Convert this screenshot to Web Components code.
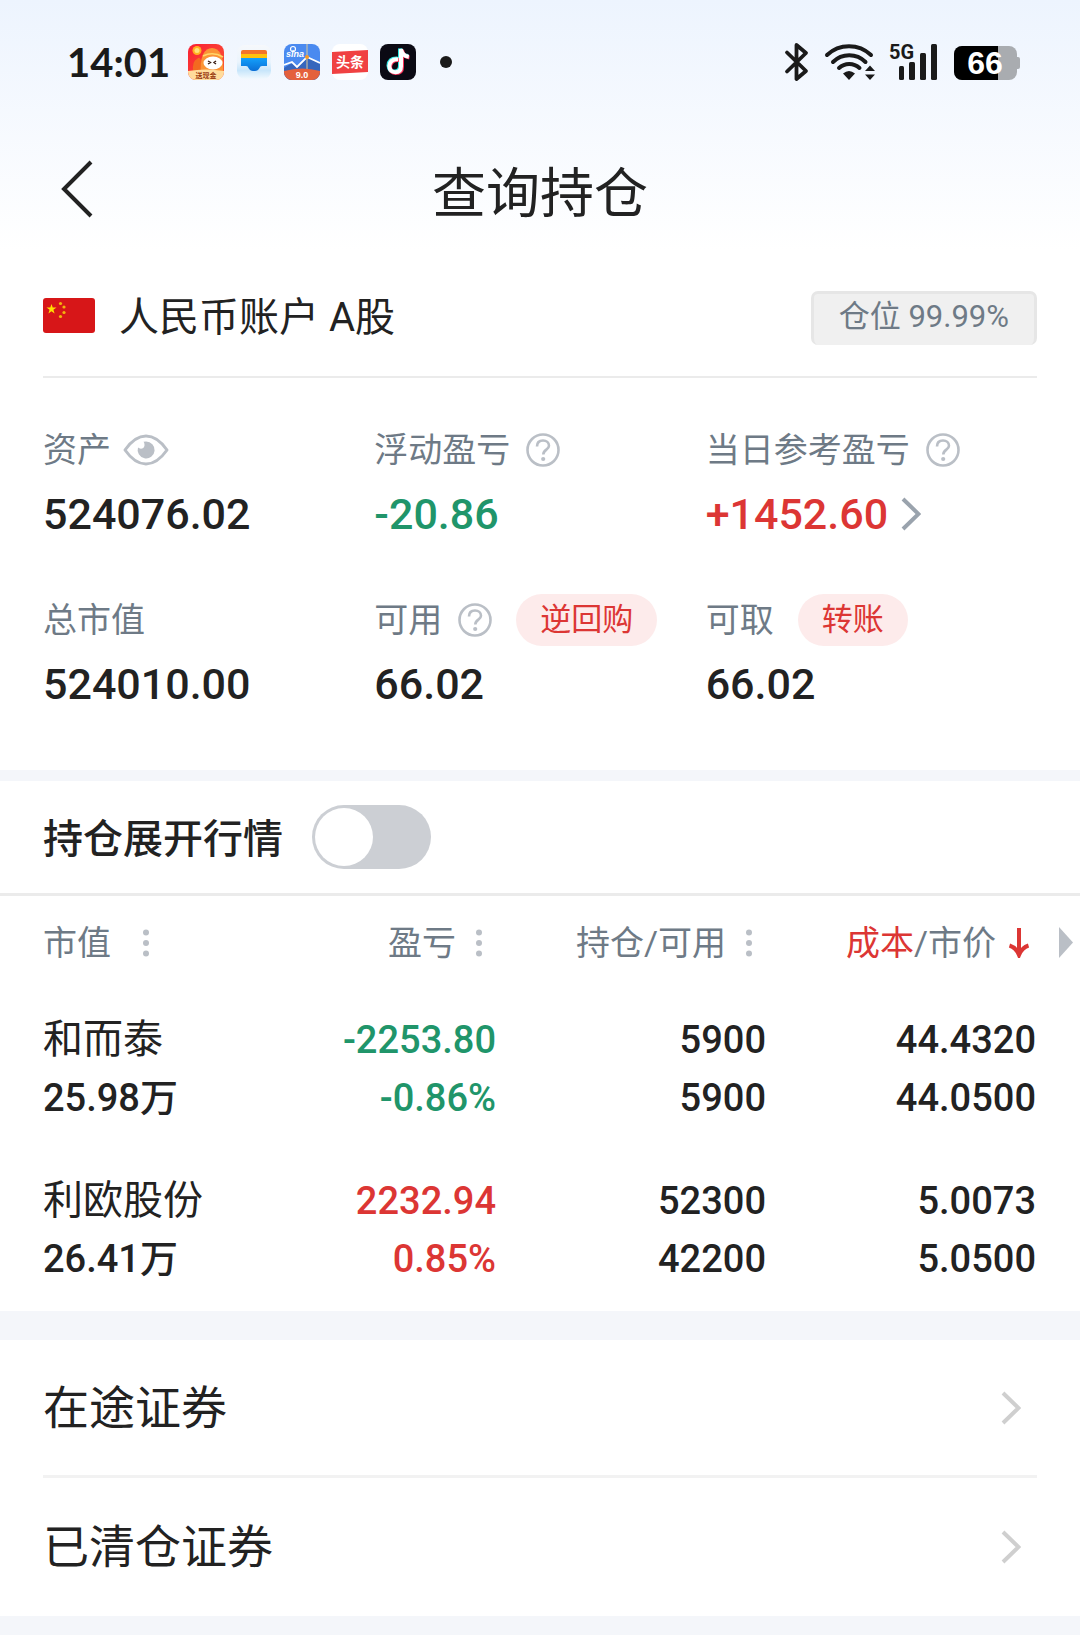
<!DOCTYPE html>
<html lang="zh-CN">
<head>
<meta charset="utf-8">
<meta name="viewport" content="width=device-width, initial-scale=1">
<title>查询持仓</title>
<style>
  :root {
    --ink: #222222;
    --muted: #6e7a86;
    --icon: #babfc6;
    --red: #dc3634;
    --green: #20956a;
    --band: #f4f6fa;
    --line: #ebebeb;
    --edge: 43px;
    --sans: Roboto, "Noto Sans CJK SC", sans-serif;
  }
  body {
    margin: 0;
    min-height: 100vh;
    background: var(--band);
    color: var(--ink);
    font-family: var(--sans);
  }
</style>
</head>
<body>
<holdings-page></holdings-page>

<script>
const define = (name, markup, setup) => {
  const template = document.createElement('template');
  template.innerHTML = markup;
  customElements.define(name, class extends HTMLElement {
    constructor() {
      super();
      this.attachShadow({ mode: 'open' }).append(template.content.cloneNode(true));
    }
    connectedCallback() {
      if (setup) setup(this, this.shadowRoot);
    }
  });
};

/* Line icons shared by the page */
const ICONS = {
  back: ['0 0 32 58', '<path d="M30 2 L3 29 L30 56" fill="none" stroke="currentColor" stroke-width="4"/>'],
  next: ['0 0 20 34', '<path d="M2 2 L17.500 17 L2 32" fill="none" stroke="currentColor" stroke-width="4"/>'],
  help: ['0 0 34 34', '<circle cx="17" cy="17" r="15.500" fill="none" stroke="currentColor" stroke-width="2.600"/><path d="M11 13.500 C11 9.500 13.500 7.500 17 7.500 C20.500 7.500 23 9.600 23 12.800 C23 16.800 17.300 16.600 17.300 21.500" fill="none" stroke="currentColor" stroke-width="2.600"/><circle cx="17.200" cy="26" r="2.100" fill="currentColor"/>'],
  eye: ['0 0 46 32', '<path d="M2 16 C9 6 16 2 23 2 C30 2 37 6 44 16 C37 26 30 30 23 30 C16 30 9 26 2 16 Z" fill="none" stroke="currentColor" stroke-width="3" stroke-linejoin="round"/><path d="M23 7.500 A8.500 8.500 0 1 1 15 13.500 C17 15.500 21 15 21.500 11.500 C21.600 9.500 21 8.200 20.500 7.800 Z" fill="currentColor"/>'],
  dots: ['0 0 6 28', '<circle cx="3" cy="3.500" r="3" fill="currentColor"/><circle cx="3" cy="14" r="3" fill="currentColor"/><circle cx="3" cy="24.500" r="3" fill="currentColor"/>'],
  down: ['0 0 22 30', '<path d="M11 0 V26 M1.500 17.500 Q8 19.500 11 27 Q14 19.500 20.500 17.500" fill="none" stroke="currentColor" stroke-width="4"/>'],
  more: ['0 0 14 31', '<path d="M0 0 L14 15.500 L0 31 Z" fill="currentColor"/>'],
  flag: ['0 0 52 35', '<rect width="52" height="35" rx="3" fill="#d71618"/><path d="M8.500 6 L9.700 9.600 H13.500 L10.400 11.800 L11.600 15.500 L8.500 13.200 L5.400 15.500 L6.600 11.800 L3.500 9.600 H7.300 Z" fill="#ffe100"/><g fill="#f3b40d"><circle cx="17.500" cy="5.500" r="1.600"/><circle cx="21" cy="9" r="1.600"/><circle cx="21" cy="14.500" r="1.600"/><circle cx="17.500" cy="18.500" r="1.600"/></g>']
};

define('ui-icon', `
  <style>
    :host { display: inline-flex; flex: none; }
    svg { display: block; }
  </style>
  <svg aria-hidden="true"></svg>
`, (host, root) => {
  const [box, shapes] = ICONS[host.getAttribute('name')];
  const svg = root.querySelector('svg');
  const [, , w, h] = box.split(' ');
  svg.setAttribute('viewBox', box);
  svg.setAttribute('width', w);
  svg.setAttribute('height', h);
  svg.innerHTML = shapes;
});

define('status-bar', `
  <style>
    :host { display: flex; align-items: center; height: 124px; padding: 0 60px 0 67px; justify-content: space-between; }
    .side { display: flex; align-items: center; }
    time { width: 97px; font: 700 40px/48px Lato, sans-serif; color: #1a1a1a; white-space: nowrap; }
    .apps { display: flex; gap: 12px; align-items: center; margin-left: 24px; }
    .right { gap: 14px; }
    svg { display: block; overflow: visible; }
    .dot { width: 12px; height: 12px; border-radius: 50%; background: #1a1a1a; margin-left: 12px; }
  </style>
  <div class="side">
    <time>14:01</time>
    <div class="apps">
      <svg width="36" height="36" viewBox="0 0 36 36">
        <defs><linearGradient id="a" x1="0" y1="0" x2="1" y2="1"><stop offset="0" stop-color="#f91f33"/><stop offset="1" stop-color="#fb5a35"/></linearGradient><clipPath id="ac"><rect width="36" height="36" rx="8"/></clipPath></defs>
        <g clip-path="url(#ac)">
          <rect width="36" height="36" fill="url(#a)"/>
          <path d="M5 28 Q4 17 9 15 Q13 11 13 20 L13 28 Z" fill="#f36a20"/>
          <path d="M13 30 Q11 5 24 4 Q37 5 35 30 Z" fill="#fb9436"/>
          <path d="M15 12 Q25 7 35 13" fill="none" stroke="#ffd76a" stroke-width="1.500"/>
          <circle cx="9" cy="6.500" r="4.500" fill="#ffb020"/><circle cx="9" cy="6.500" r="2.500" fill="#ffe27a"/>
          <ellipse cx="25" cy="19" rx="9.500" ry="6.500" fill="#fff"/>
          <path d="M20 17 L22.500 18.500 L20 20 M28 17 L26 18.500 L28 20" fill="none" stroke="#3a1d14" stroke-width="1.400"/>
          <path d="M0 27 Q18 24 36 27 V36 H0 Z" fill="#ffdc9c"/>
          <text x="18" y="34" font-family="Noto Sans CJK SC, sans-serif" font-weight="700" font-size="7" text-anchor="middle" fill="#9a3a12">送现金</text>
        </g>
      </svg>
      <svg width="36" height="36" viewBox="0 0 36 36">
        <defs><linearGradient id="b" x1="0" y1="0" x2="0" y2="1"><stop offset="0" stop-color="#f6f8fb"/><stop offset=".5" stop-color="#eaf4fd"/><stop offset=".75" stop-color="#c8e6fb"/><stop offset="1" stop-color="#f2f9fe"/></linearGradient><linearGradient id="b2" x1="0" y1="0" x2="0" y2="1"><stop offset="0" stop-color="#14a0fb"/><stop offset="1" stop-color="#0b6fd6"/></linearGradient></defs>
        <rect x="1" y="1" width="34" height="34" rx="8" fill="url(#b)"/>
        <path d="M5 14 V8 Q5 6 7 6 H29 Q31 6 31 8 V14 Z" fill="#f4742a"/>
        <path d="M5 10 H31 V16 H5 Z" fill="#ffc20e"/>
        <path d="M5 14 H31 V22 H26 Q24 22 23.500 24 Q22 27 19 27 H17 Q14 27 12.500 24 Q12 22 10 22 H5 Z" fill="url(#b2)"/>
      </svg>
      <svg width="36" height="36" viewBox="0 0 36 36">
        <defs><clipPath id="cc"><rect width="36" height="36" rx="8"/></clipPath></defs>
        <g clip-path="url(#cc)">
          <rect width="36" height="36" fill="#4a8af0"/>
          <path d="M0 24 L8 19 L13 24 L24 13 L36 20 V36 H0 Z" fill="#3566bd"/>
          <path d="M0 21 L8 18 L13 23 L23 13 L36 19" fill="none" stroke="#fff" stroke-width="1.800"/>
          <path d="M23 0 V28" stroke="#d9c79a" stroke-width="1"/>
          <circle cx="23" cy="13" r="2" fill="#f79a28"/>
          <path d="M0 27 Q18 22 36 27 V36 H0 Z" fill="#e4603c"/>
          <circle cx="9" cy="5" r="2.500" fill="none" stroke="#fff" stroke-width="1.200"/>
          <text x="11" y="13" font-family="Liberation Sans, sans-serif" font-style="italic" font-weight="700" font-size="9" text-anchor="middle" fill="#fff">sina</text>
          <text x="18" y="34" font-family="Liberation Sans, sans-serif" font-weight="700" font-size="9" text-anchor="middle" fill="#fff">9.0</text>
        </g>
      </svg>
      <svg width="36" height="36" viewBox="0 0 36 36">
        <rect width="36" height="36" rx="8" fill="#fff"/>
        <path d="M0 8 L36 6 V28 L0 30 Z" fill="#f04142"/>
        <text x="18" y="23" font-family="Noto Sans CJK SC, sans-serif" font-weight="700" font-size="14" text-anchor="middle" fill="#fff">头条</text>
      </svg>
      <svg width="36" height="36" viewBox="0 0 36 36">
        <rect width="36" height="36" rx="8" fill="#0b0a14"/>
        <g fill="none" stroke-width="4">
          <path d="M17.500 14.500 Q9 14 8.500 21.500 Q9 27.500 14.500 27.500 Q20 27.500 20 21.500 V4.500 Q21 11 28 12" stroke="#2ee6e4"/>
          <path d="M19 16 Q10.500 15.500 10 23 Q10.500 29 16 29 Q22 29 22 23 V6 Q23 12.500 29.500 13.500" stroke="#fb3058"/>
          <path d="M18.200 15.200 Q9.800 14.800 9.300 22.200 Q9.800 28.200 15.300 28.200 Q21 28.200 21 22.200 V5 Q22 11.800 28.800 12.800" stroke="#fff"/>
        </g>
      </svg>
      <span class="dot"></span>
    </div>
  </div>
  <div class="side right">
    <svg width="26" height="38" viewBox="0 0 26 38" fill="none" stroke="#1a1a1a" stroke-width="3.800" stroke-linejoin="round" stroke-linecap="round"><path d="M2 9.500 L21 28 L11.500 36 V2 L21 10 L2 28.500"/></svg>
    <svg width="50" height="36" viewBox="0 0 50 36">
      <g fill="none" stroke="#1a1a1a" stroke-width="4" stroke-linecap="round"><path d="M2 11 A32 32 0 0 1 46 11"/><path d="M8 18 A23 23 0 0 1 40.500 18"/><path d="M14 24 A15 15 0 0 1 34.500 24"/></g>
      <path d="M18 29.500 Q24 24.500 30 29.500 L24 36 Z M45 21.500 L50 27 H40 Z M45 36 L50 30.500 H40 Z" fill="#1a1a1a"/>
    </svg>
    <svg width="51" height="44" viewBox="0 -4 51 44">
      <text x="0" y="15" font-family="Roboto, sans-serif" font-weight="700" font-size="20" fill="#1a1a1a">5G</text>
      <g fill="#1a1a1a"><rect x="10" y="22" width="5" height="14" rx="1.500"/><rect x="20" y="18" width="6" height="18" rx="1.500"/><rect x="31" y="9" width="6" height="27" rx="1.500"/><rect x="42" y="0" width="6" height="36" rx="1.500"/></g>
    </svg>
    <svg width="66" height="36" viewBox="0 -2 66 36">
      <defs><clipPath id="bc"><rect width="63" height="34" rx="8"/></clipPath></defs>
      <g clip-path="url(#bc)"><rect width="63" height="34" fill="#a9acb0"/><rect width="44" height="34" fill="#000"/></g>
      <path d="M63 11 H64 Q66 11 66 13 V21 Q66 23 64 23 H63 Z" fill="#a9acb0"/>
      <text x="31" y="28" font-family="Liberation Sans, sans-serif" font-weight="700" font-size="32" text-anchor="middle" fill="#fff">66</text>
    </svg>
  </div>
`);

define('nav-bar', `
  <style>
    :host { display: grid; grid-template-columns: 1fr auto 1fr; align-items: center; height: 130px; }
    button { justify-self: start; display: flex; margin-left: 49px; padding: 12px; border: 0; background: none; color: inherit; }
    h1 { margin: 0; padding-top: 12px; font-size: 54px; line-height: 80px; font-weight: 400; }
  </style>
  <button type="button" aria-label="返回"><ui-icon name="back"></ui-icon></button>
  <h1><slot></slot></h1>
`);

define('account-bar', `
  <style>
    :host { display: flex; align-items: center; gap: 24px; height: 122px; margin: 0 var(--edge); border-bottom: 2px solid var(--line); }
    h2 { flex: 1; margin: 0; padding-top: 6px; font-size: 40px; line-height: 60px; font-weight: 400; }
    .ratio { margin-top: 6px; padding: 0 25px 5px; border: 3px solid #e6e6e6; border-bottom: 0; border-radius: 7px; background: #f0f0f0; color: var(--muted); font-size: 31px; line-height: 46px; }
  </style>
  <ui-icon name="flag"></ui-icon>
  <h2><slot></slot></h2>
  <span class="ratio"><slot name="ratio"></slot></span>
`);

define('stat-item', `
  <style>
    :host { display: block; }
    .label { display: flex; align-items: center; height: 52px; gap: 16px; color: var(--muted); font-size: 34px; line-height: 52px; white-space: nowrap; }
    .value { display: flex; align-items: center; gap: 13px; margin-top: 9px; font-size: 43px; line-height: 58px; font-weight: 500; }
    :host([tone="up"]) .value { color: var(--red); }
    :host([tone="down"]) .value { color: var(--green); }
  </style>
  <div class="label"><slot name="label"></slot></div>
  <div class="value"><slot></slot></div>
`);

define('asset-summary', `
  <style>
    :host { display: grid; grid-template-columns: repeat(3, 1fr); row-gap: 51px; padding: 46px var(--edge) 57px; }
    button { display: inline-flex; padding: 0; border: 0; background: none; color: var(--icon); font-family: inherit; }
    .eye { margin-left: -4px; }
    .go { color: #9aa3ad; }
    .pill { margin-left: 8px; padding: 0 24px; border-radius: 26px; background: #fdebeb; color: var(--red); font-size: 31px; line-height: 52px; }
  </style>
  <stat-item>
    <span slot="label">资产</span>
    <button slot="label" class="eye" type="button" aria-label="隐藏金额"><ui-icon name="eye"></ui-icon></button>
    524076.02
  </stat-item>
  <stat-item tone="down">
    <span slot="label">浮动盈亏</span>
    <button slot="label" type="button" aria-label="浮动盈亏说明"><ui-icon name="help"></ui-icon></button>
    -20.86
  </stat-item>
  <stat-item tone="up">
    <span slot="label">当日参考盈亏</span>
    <button slot="label" type="button" aria-label="当日参考盈亏说明"><ui-icon name="help"></ui-icon></button>
    <span>+1452.60</span>
    <button class="go" type="button" aria-label="盈亏详情"><ui-icon name="next"></ui-icon></button>
  </stat-item>
  <stat-item>
    <span slot="label">总市值</span>
    524010.00
  </stat-item>
  <stat-item>
    <span slot="label">可用</span>
    <button slot="label" type="button" aria-label="可用说明"><ui-icon name="help"></ui-icon></button>
    <button slot="label" class="pill" type="button">逆回购</button>
    66.02
  </stat-item>
  <stat-item>
    <span slot="label">可取</span>
    <button slot="label" class="pill" type="button">转账</button>
    66.02
  </stat-item>
`);

define('quote-switch', `
  <style>
    :host { display: flex; align-items: center; gap: 29px; height: 112px; padding: 0 var(--edge); border-bottom: 3px solid var(--line); }
    label { padding-top: 6px; font-size: 40px; line-height: 60px; font-weight: 500; }
    input { appearance: none; flex: none; margin: 0; width: 119px; height: 64px; border-radius: 32px; background: #cccfd4; }
    input::before { content: ""; display: block; width: 58px; height: 58px; margin: 3px; border-radius: 50%; background: #fff; }
    input:checked { background: var(--red); }
    input:checked::before { margin-left: auto; }
  </style>
  <label for="expand">持仓展开行情</label>
  <input id="expand" type="checkbox" role="switch">
`);

define('holdings-table', `
  <style>
    :host { display: block; }
    table { width: 100%; border-collapse: collapse; table-layout: fixed; }
    .first { width: 226px; }
    .last { width: 44px; }
    th, td { padding: 0; text-align: right; white-space: nowrap; font-weight: 500; }
    thead th { height: 93px; font-weight: 400; }
    button { display: inline-flex; align-items: center; gap: 20px; padding: 0 14px 0 0; border: 0; background: none; color: var(--muted); font-family: inherit; font-size: 34px; line-height: 52px; vertical-align: middle; }
    button ui-icon { color: var(--icon); }
    th:first-child, td:first-child { padding-left: var(--edge); text-align: left; }
    th:first-child button { gap: 32px; }
    .sorted { gap: 12px; padding-right: 6px; }
    .sorted b, .sorted ui-icon { color: var(--red); font-weight: 400; }
    .scroll { padding: 0 7px 0 0; }
    tbody th, tbody td { padding-top: 22px; padding-bottom: 23px; font-size: 38px; line-height: 58px; }
    span { display: block; }
    .name { font-size: 40px; font-weight: 400; }
    .up { color: var(--red); }
    .down { color: var(--green); }
  </style>
  <table>
    <colgroup><col class="first"><col><col><col><col class="last"></colgroup>
    <thead>
      <tr>
        <th scope="col"><button type="button">市值<ui-icon name="dots"></ui-icon></button></th>
        <th scope="col"><button type="button">盈亏<ui-icon name="dots"></ui-icon></button></th>
        <th scope="col"><button type="button">持仓/可用<ui-icon name="dots"></ui-icon></button></th>
        <th scope="col" aria-sort="descending"><button class="sorted" type="button"><div><b>成本</b>/市价</div><ui-icon name="down"></ui-icon></button></th>
        <th><button class="scroll" type="button" aria-label="更多列"><ui-icon name="more"></ui-icon></button></th>
      </tr>
    </thead>
    <tbody>
      <tr>
        <th scope="row"><span class="name">和而泰</span><span>25.98万</span></th>
        <td class="down"><span>-2253.80</span><span>-0.86%</span></td>
        <td><span>5900</span><span>5900</span></td>
        <td><span>44.4320</span><span>44.0500</span></td>
        <td></td>
      </tr>
      <tr>
        <th scope="row"><span class="name">利欧股份</span><span>26.41万</span></th>
        <td class="up"><span>2232.94</span><span>0.85%</span></td>
        <td><span>52300</span><span>42200</span></td>
        <td><span>5.0073</span><span>5.0500</span></td>
        <td></td>
      </tr>
    </tbody>
  </table>
`);

define('link-row', `
  <style>
    :host { display: block; padding: 0 var(--edge); }
    a { display: flex; align-items: center; justify-content: space-between; height: 135px; padding-right: 16px; color: inherit; text-decoration: none; font-size: 46px; line-height: 68px; }
    :host([divided]) a { border-bottom: 3px solid #f2f2f2; }
    :host(:not([divided])) a { height: 138px; }
    ui-icon { color: #cfcfcf; }
  </style>
  <a href="#"><slot></slot><ui-icon name="next"></ui-icon></a>
`);

define('holdings-page', `
  <style>
    :host { display: block; }
    .top { background: #fff linear-gradient(#edf4fe, #fff 250px) no-repeat; }
    section, nav { background: #fff; }
    section { margin-top: 11px; }
    nav { margin-top: 29px; }
  </style>
  <div class="top">
    <status-bar></status-bar>
    <nav-bar>查询持仓</nav-bar>
    <account-bar>人民币账户 A股<span slot="ratio">仓位 99.99%</span></account-bar>
    <asset-summary></asset-summary>
  </div>
  <section>
    <quote-switch></quote-switch>
    <holdings-table></holdings-table>
  </section>
  <nav>
    <link-row divided>在途证券</link-row>
    <link-row>已清仓证券</link-row>
  </nav>
`);
</script>
</body>
</html>
